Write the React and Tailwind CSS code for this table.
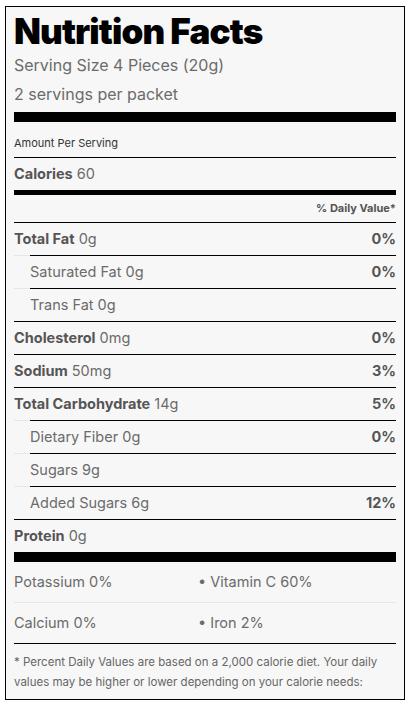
import React from "react";

const F = { fontFamily: "Inter, 'Open Sans', sans-serif" };

function Row({ label, value, dv, indent }) {
  if (indent) {
    return (
      <div className="flex">
        <div className="w-4 border-t border-[#e6e6e6]" />
        <div className="flex-1 h-[33px] border-t border-black flex items-center justify-between text-[14.5px]">
          <span className="text-[#6b6b6b]">{label} {value}</span>
          {dv && <span className="font-bold text-[#555]">{dv}</span>}
        </div>
      </div>
    );
  }
  return (
    <div className="h-[33px] border-t border-black flex items-center justify-between text-[14.5px]">
      <span>
        <span className="font-bold text-[#555]">{label}</span>{" "}
        <span className="text-[#6b6b6b]">{value}</span>
      </span>
      {dv && <span className="font-bold text-[#555]">{dv}</span>}
    </div>
  );
}

export default function App() {
  return (
    <div className="bg-white min-h-[709px] pl-[5px] pt-[6px]" style={F}>
      <div className="w-[400px] h-[694px] border border-black bg-[#f7f7f7] px-2">
        <h1 className="text-[35px] leading-[40px] font-black text-black tracking-tight pt-[4px]">Nutrition Facts</h1>
        <p className="text-[16px] leading-[29px] text-[#6b6b6b]">Serving Size 4 Pieces (20g)</p>
        <p className="text-[16px] leading-[29px] text-[#6b6b6b]">2 servings per packet</p>
        <div className="h-[10px] bg-black mt-[3px]" />
        <div className="h-[35px] flex items-center pt-[7px] text-[11px] text-[#333]">Amount Per Serving</div>
        <div className="h-[33px] border-t border-black flex items-center text-[14.5px]">
          <span className="font-bold text-[#555]">Calories</span>
          <span className="text-[#6b6b6b] ml-1">60</span>
        </div>
        <div className="h-[5px] bg-black" />
        <div className="h-[27px] flex items-center justify-end text-[11px] font-bold text-[#555]">% Daily Value*</div>
        <Row label="Total Fat" value="0g" dv="0%" />
        <Row indent label="Saturated Fat" value="0g" dv="0%" />
        <Row indent label="Trans Fat" value="0g" />
        <Row label="Cholesterol" value="0mg" dv="0%" />
        <Row label="Sodium" value="50mg" dv="3%" />
        <Row label="Total Carbohydrate" value="14g" dv="5%" />
        <Row indent label="Dietary Fiber" value="0g" dv="0%" />
        <Row indent label="Sugars" value="9g" />
        <Row indent label="Added Sugars" value="6g" dv="12%" />
        <Row label="Protein" value="0g" />
        <div className="h-[10px] bg-black" />
        <div className="h-[40px] flex items-center text-[14.5px] text-[#6b6b6b]">
          <span className="w-[184px]">Potassium 0%</span>
          <span>• Vitamin C 60%</span>
        </div>
        <div className="h-[41px] border-t border-[#e6e6e6] flex items-center text-[14.5px] text-[#6b6b6b]">
          <span className="w-[184px]">Calcium 0%</span>
          <span>• Iron 2%</span>
        </div>
        <div className="border-t border-black pt-[8px] text-[11.5px] leading-[20px] text-[#666]">
          * Percent Daily Values are based on a 2,000 calorie diet. Your daily values may be higher or lower depending on your calorie needs:
        </div>
      </div>
    </div>
  );
}
